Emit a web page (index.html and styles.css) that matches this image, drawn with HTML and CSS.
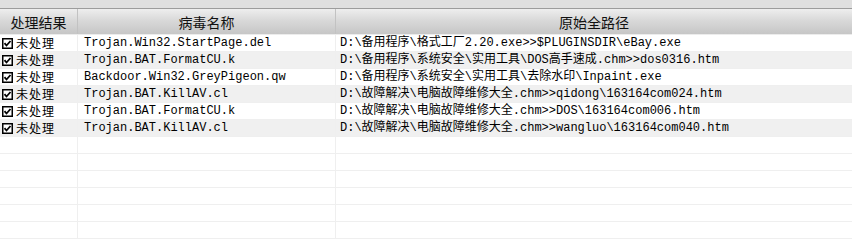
FILE: index.html
```html
<!DOCTYPE html>
<html lang="zh-CN">
<head>
<meta charset="utf-8">
<link rel="stylesheet" href="styles.css">
</head>
<body>
<div class="topbar"></div>
<div class="grid">
  <div class="hrow">
    <div class="hcell">处理结果</div>
    <div class="hcell">病毒名称</div>
    <div class="hcell">原始全路径</div>
  </div>
  <div class="row"><div class="cell c1"><span class="chk"><svg viewBox="0 0 11 11" width="11" height="11"><rect x="0.75" y="0.75" width="9.5" height="9.5" fill="#fff" stroke="#000" stroke-width="1.5"/><path d="M2.5 5.2 L4.5 7.5 L8.5 3" fill="none" stroke="#000" stroke-width="1.8"/></svg></span><span class="st">未处理</span></div><div class="cell c2">Trojan.Win32.StartPage.del</div><div class="cell c3">D:\备用程序\格式工厂2.20.exe&gt;&gt;$PLUGINSDIR\eBay.exe</div></div>
  <div class="row alt"><div class="cell c1"><span class="chk"><svg viewBox="0 0 11 11" width="11" height="11"><rect x="0.75" y="0.75" width="9.5" height="9.5" fill="#fff" stroke="#000" stroke-width="1.5"/><path d="M2.5 5.2 L4.5 7.5 L8.5 3" fill="none" stroke="#000" stroke-width="1.8"/></svg></span><span class="st">未处理</span></div><div class="cell c2">Trojan.BAT.FormatCU.k</div><div class="cell c3">D:\备用程序\系统安全\实用工具\DOS高手速成.chm&gt;&gt;dos0316.htm</div></div>
  <div class="row"><div class="cell c1"><span class="chk"><svg viewBox="0 0 11 11" width="11" height="11"><rect x="0.75" y="0.75" width="9.5" height="9.5" fill="#fff" stroke="#000" stroke-width="1.5"/><path d="M2.5 5.2 L4.5 7.5 L8.5 3" fill="none" stroke="#000" stroke-width="1.8"/></svg></span><span class="st">未处理</span></div><div class="cell c2">Backdoor.Win32.GreyPigeon.qw</div><div class="cell c3">D:\备用程序\系统安全\实用工具\去除水印\Inpaint.exe</div></div>
  <div class="row alt"><div class="cell c1"><span class="chk"><svg viewBox="0 0 11 11" width="11" height="11"><rect x="0.75" y="0.75" width="9.5" height="9.5" fill="#fff" stroke="#000" stroke-width="1.5"/><path d="M2.5 5.2 L4.5 7.5 L8.5 3" fill="none" stroke="#000" stroke-width="1.8"/></svg></span><span class="st">未处理</span></div><div class="cell c2">Trojan.BAT.KillAV.cl</div><div class="cell c3">D:\故障解决\电脑故障维修大全.chm&gt;&gt;qidong\163164com024.htm</div></div>
  <div class="row"><div class="cell c1"><span class="chk"><svg viewBox="0 0 11 11" width="11" height="11"><rect x="0.75" y="0.75" width="9.5" height="9.5" fill="#fff" stroke="#000" stroke-width="1.5"/><path d="M2.5 5.2 L4.5 7.5 L8.5 3" fill="none" stroke="#000" stroke-width="1.8"/></svg></span><span class="st">未处理</span></div><div class="cell c2">Trojan.BAT.FormatCU.k</div><div class="cell c3">D:\故障解决\电脑故障维修大全.chm&gt;&gt;DOS\163164com006.htm</div></div>
  <div class="row alt"><div class="cell c1"><span class="chk"><svg viewBox="0 0 11 11" width="11" height="11"><rect x="0.75" y="0.75" width="9.5" height="9.5" fill="#fff" stroke="#000" stroke-width="1.5"/><path d="M2.5 5.2 L4.5 7.5 L8.5 3" fill="none" stroke="#000" stroke-width="1.8"/></svg></span><span class="st">未处理</span></div><div class="cell c2">Trojan.BAT.KillAV.cl</div><div class="cell c3">D:\故障解决\电脑故障维修大全.chm&gt;&gt;wangluo\163164com040.htm</div></div>
  <div class="row"><div class="cell"></div><div class="cell"></div><div class="cell"></div></div>
  <div class="row"><div class="cell"></div><div class="cell"></div><div class="cell"></div></div>
  <div class="row"><div class="cell"></div><div class="cell"></div><div class="cell"></div></div>
  <div class="row"><div class="cell"></div><div class="cell"></div><div class="cell"></div></div>
  <div class="row"><div class="cell"></div><div class="cell"></div><div class="cell"></div></div>
  <div class="row"><div class="cell"></div><div class="cell"></div><div class="cell"></div></div>
</div>
</body>
</html>
```
FILE: styles.css
```css
html, body {
  margin: 0;
  padding: 0;
  background: #fff;
  overflow: hidden;
}
body {
  width: 852px;
  height: 240px;
  font-family: "Liberation Mono", "Noto Sans CJK SC", monospace;
  font-size: 12px;
  color: #000;
}
.topbar {
  height: 8px;
  background: #dfdfdf;
  border-bottom: 1px solid #9c9c9c;
}
.hrow, .row {
  display: grid;
  grid-template-columns: 78px 258px 1fr;
}
.hrow {
  height: 25px;
  background: linear-gradient(#eeeeee, #d9d9d9 45%, #c6c6c6);
  border-bottom: 1px solid #ececec;
}
.hcell {
  display: flex;
  align-items: center;
  justify-content: center;
  padding-top: 1px;
  font-family: "Noto Sans CJK SC", sans-serif;
  font-size: 14px;
  line-height: 18px;
  color: #111;
  border-right: 1px solid #c2c2c2;
}
.hcell:last-child {
  border-right: none;
}
.row {
  height: 17px;
}
.row.alt {
  background: #f0f0f0;
}
.cell {
  border-right: 1px solid #efefef;
  border-bottom: 1px solid #efefef;
  display: flex;
  align-items: center;
  white-space: nowrap;
  overflow: hidden;
  line-height: 16px;
  height: 16px;
}
.cell:last-child {
  border-right: none;
}
.c1 {
  padding-left: 2px;
}
.st {
  font-family: "Noto Sans CJK SC", sans-serif;
  font-size: 12px;
  letter-spacing: 1px;
}
.c2 {
  padding-left: 6px;
}
.c3 {
  padding-left: 4px;
}
.chk {
  display: inline-flex;
  width: 11px;
  height: 11px;
  margin-right: 3px;
  flex: none;
}
```
